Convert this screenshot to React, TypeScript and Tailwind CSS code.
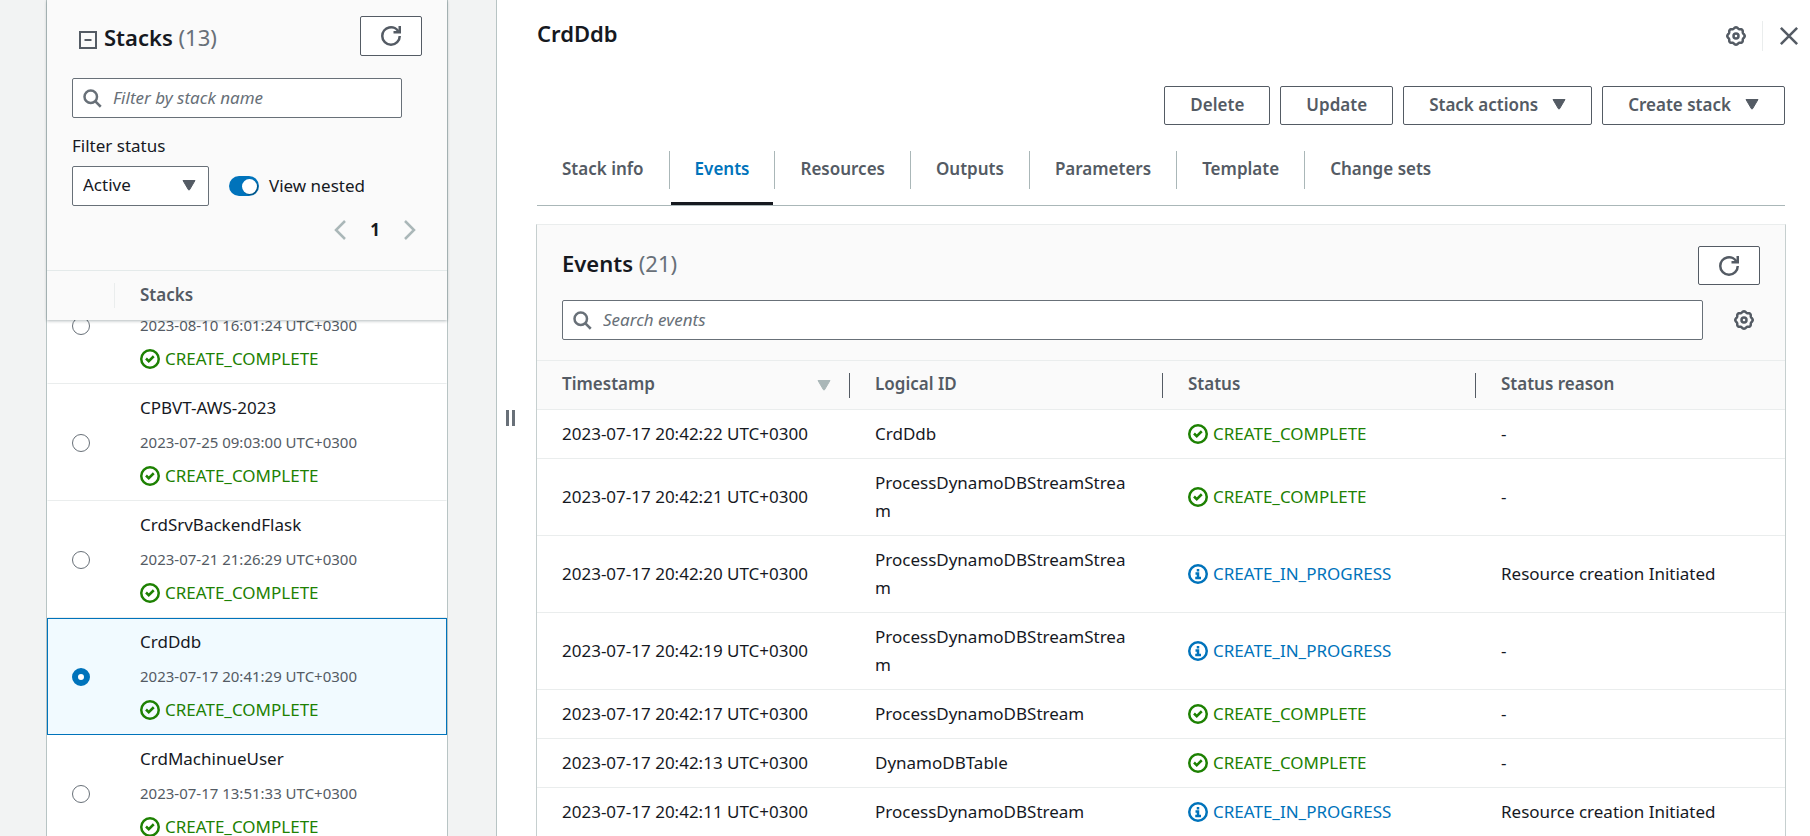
import React from "react";

const svgBase = { fill: "none", stroke: "currentColor", strokeWidth: 2, viewBox: "0 0 16 16", "aria-hidden": true } as const;

const Refresh = () => (
  <svg {...svgBase} className="size-5">
    <path d="M10 5h5V0" />
    <path d="M15 8a7 7 0 0 1-14 0 7 7 0 0 1 13.3-3" />
  </svg>
);
const Search = ({ className }: { className: string }) => (
  <svg {...svgBase} className={className}>
    <circle cx="7" cy="7" r="5" />
    <path d="M15 15l-4.5-4.5" />
  </svg>
);
const Caret = ({ className }: { className: string }) => (
  <svg viewBox="0 0 14 11" aria-hidden className={className}>
    <path d="M1 .5h12L7.6 9.700q-.6.9-1.200 0Z" fill="currentColor" stroke="currentColor" strokeLinejoin="round" />
  </svg>
);

// Eight-lobed rim, sampled from a polar curve around (8, 8).
const gearRim = Array.from({ length: 96 }, (_, i) => {
  const a = (i / 96) * Math.PI * 2;
  const r = 6.5 + 0.5 * Math.cos(8 * a);
  return `${(8 + r * Math.cos(a)).toFixed(2)},${(8 + r * Math.sin(a)).toFixed(2)}`;
}).join(" ");

const Gear = () => (
  <svg {...svgBase} className="size-5">
    <circle cx="8" cy="8" r="2" />
    <polygon points={gearRim} />
  </svg>
);
const Close = () => (
  <svg {...svgBase} className="size-5"><path d="M1.500 1.500l13 13M14.500 1.500l-13 13" /></svg>
);

function Status({ value }: { value: string }) {
  const ok = value === "CREATE_COMPLETE";
  return (
    <span className={ok ? "flex items-center gap-[5px] text-[#1d8102]" : "flex items-center gap-[5px] text-[#0073bb]"}>
      <svg {...svgBase} className="size-5 shrink-0">
        <circle cx="8" cy="8" r="7" />
        {ok ? <path d="M4.800 7.600l2.200 2.200 4-4" /> : <path d="M8 11.500V7.500H6M5.800 11.200h4.600M8 4v2" />}
      </svg>
      <span className="-mt-px">{value}</span>
    </span>
  );
}

const stacks = [
  { name: "", time: "2023-08-10 16:01:24 UTC+0300" },
  { name: "CPBVT-AWS-2023", time: "2023-07-25 09:03:00 UTC+0300" },
  { name: "CrdSrvBackendFlask", time: "2023-07-21 21:26:29 UTC+0300" },
  { name: "CrdDdb", time: "2023-07-17 20:41:29 UTC+0300", selected: true },
  { name: "CrdMachinueUser", time: "2023-07-17 13:51:33 UTC+0300" },
];

const tabs = ["Stack info", "Events", "Resources", "Outputs", "Parameters", "Template", "Change sets"];

const events = [
  ["2023-07-17 20:42:22 UTC+0300", "CrdDdb", "CREATE_COMPLETE", "-"],
  ["2023-07-17 20:42:21 UTC+0300", "ProcessDynamoDBStreamStream", "CREATE_COMPLETE", "-"],
  ["2023-07-17 20:42:20 UTC+0300", "ProcessDynamoDBStreamStream", "CREATE_IN_PROGRESS", "Resource creation Initiated"],
  ["2023-07-17 20:42:19 UTC+0300", "ProcessDynamoDBStreamStream", "CREATE_IN_PROGRESS", "-"],
  ["2023-07-17 20:42:17 UTC+0300", "ProcessDynamoDBStream", "CREATE_COMPLETE", "-"],
  ["2023-07-17 20:42:13 UTC+0300", "DynamoDBTable", "CREATE_COMPLETE", "-"],
  ["2023-07-17 20:42:11 UTC+0300", "ProcessDynamoDBStream", "CREATE_IN_PROGRESS", "Resource creation Initiated"],
];

const buttonClass =
  "flex h-[39px] items-center justify-center gap-[14px] rounded-[2px] border border-[#545b64] bg-white px-[25px] pb-[2px] font-semibold text-[#545b64]";
const inputClass =
  "h-10 w-full rounded-[2px] border border-[#687078] bg-white pb-[2px] pl-10 pr-3 text-[#16191f] placeholder:italic placeholder:text-[#687078]";

function Sidebar() {
  return (
    <aside className="flex w-[402px] shrink-0 flex-col border-x border-[#b8c4c4] bg-white">
      <div className="relative shrink-0 bg-[#fafafa] shadow-[0_1px_3px_rgba(0,28,36,0.3)]">
        <div className="px-[25px] pt-4">
          <div className="flex items-center justify-between">
            <h2 className="flex items-center gap-[7px] pt-[2px] pl-[7px] text-[22px] leading-7 font-semibold text-[#16191f]">
              <button aria-label="Collapse stacks" className="mt-[6px] text-[#545b64]">
                <svg viewBox="0 0 18 18" fill="none" stroke="currentColor" strokeWidth="2" className="size-[18px]" aria-hidden>
                  <path d="M1 1h16v16H1zM5.500 9h7" />
                </svg>
              </button>
              <span>Stacks <span className="font-normal text-[#687078]">(13)</span></span>
            </h2>
            <button aria-label="Refresh stacks" className="flex h-10 w-[62px] items-center justify-center rounded-[2px] border border-[#545b64] bg-white text-[#545b64]">
              <Refresh />
            </button>
          </div>
          <div className="relative mt-[22px] mr-5">
            <Search className="absolute top-[10px] left-[10px] size-5 text-[#687078]" />
            <input type="text" aria-label="Filter by stack name" placeholder="Filter by stack name" className={inputClass} />
          </div>
          <label htmlFor="status" className="mt-[14px] block leading-7">Filter status</label>
          <div className="mt-[6px] flex items-center">
            <div className="relative w-[137px]">
              <select id="status" defaultValue="Active" className="h-10 w-full appearance-none rounded-[2px] border border-[#687078] bg-white px-[10px] pb-[2px]">
                <option>Active</option>
                <option>Deleted</option>
              </select>
              <Caret className="pointer-events-none absolute top-[14px] right-[13px] h-[11px] w-[14px] text-[#545b64]" />
            </div>
            <label className="ml-5 flex items-center gap-[10px]">
              <input
                type="checkbox"
                defaultChecked
                className="flex h-5 w-[30px] appearance-none items-center justify-end rounded-full bg-[#0073bb] pr-[2px] before:size-[15px] before:rounded-full before:bg-white before:shadow-[1px_1px_1px_rgba(0,28,36,0.4)] before:content-['']"
              />
              View nested
            </label>
          </div>
          <nav aria-label="Pages" className="mt-[10px] flex items-center justify-end gap-6 pr-[6px] text-[#aab7b8]">
            <button aria-label="Previous page">
              <svg viewBox="0 0 12 20" fill="none" stroke="currentColor" strokeWidth="2.500" className="h-5 w-3" aria-hidden><path d="M11 1L2 10l9 9" /></svg>
            </button>
            <button className="w-[10px] leading-7 font-bold text-[#16191f]">1</button>
            <button aria-label="Next page">
              <svg viewBox="0 0 12 20" fill="none" stroke="currentColor" strokeWidth="2.500" className="h-5 w-3" aria-hidden><path d="M1 1l9 9-9 9" /></svg>
            </button>
          </nav>
        </div>
        <div className="mt-[26px] flex h-[50px] items-center border-t border-[#e4eaea] font-semibold text-[#545b64]">
          <span className="h-[25px] w-[68px] border-r border-[#eaeded]" />
          <span className="pb-[2px] pl-[25px]">Stacks</span>
        </div>
      </div>
      <div className="min-h-0 flex-1 overflow-hidden">
        <ul className="-mt-[53px]">
          {stacks.map((s) => (
            <li
              key={s.time}
              className={
                s.selected
                  ? "border border-[#0073bb] bg-[#f1faff]"
                  : "border border-transparent border-b-[#eaeded]"
              }
            >
              <label className="flex h-[115px] items-center pl-6">
                <input
                  type="radio"
                  name="stack"
                  defaultChecked={s.selected}
                  className="size-[18px] shrink-0 appearance-none rounded-full border border-[#687078] bg-white checked:border-[6px] checked:border-[#0073bb]"
                />
                <span className="ml-[50px] flex flex-col pb-[2px]">
                  <span className="h-7 leading-7">{s.name}</span>
                  <span className="mt-[6px] mb-[7px] text-[15px] leading-7 text-[#545b64]">{s.time}</span>
                  <span className="leading-7"><Status value="CREATE_COMPLETE" /></span>
                </span>
              </label>
            </li>
          ))}
        </ul>
      </div>
    </aside>
  );
}

export default function App() {
  return (
    <div className="flex h-screen overflow-hidden bg-[#f2f3f3] pl-[46px] font-['Noto_Sans',sans-serif] text-[17px] text-[#16191f]">
      <Sidebar />
      <main className="ml-12 flex min-w-0 flex-1 border-l border-[#b8c4c4] bg-white">
        <button aria-label="Resize panel" className="flex w-10 shrink-0 items-center gap-[3px] pl-[9px]">
          <span className="h-4 w-[3px] bg-[#687078]" />
          <span className="h-4 w-[3px] bg-[#687078]" />
        </button>
        <div className="min-w-0 flex-1 pt-5">
          <div className="flex h-8 items-center justify-between pr-[11px]">
            <h1 className="pb-[6px] text-[22px] leading-7 font-semibold">CrdDdb</h1>
            <div className="flex items-center text-[#545b64]">
              <button aria-label="Preferences"><Gear /></button>
              <span className="ml-4 h-[30px] w-px bg-[#eaeded]" />
              <button aria-label="Close panel" className="ml-4"><Close /></button>
            </div>
          </div>
          <div className="pr-[25px]">
            <div className="mt-[34px] flex justify-end gap-[10px]">
              <button className={buttonClass}>Delete</button>
              <button className={buttonClass}>Update</button>
              <button className={buttonClass}>Stack actions <Caret className="h-[11px] w-[14px]" /></button>
              <button className={buttonClass}>Create stack <Caret className="h-[11px] w-[14px]" /></button>
            </div>
            <div role="tablist" className="mt-[26px] flex border-b border-[#aab7b8]">
              {tabs.map((t) => (
                <div key={t} className="group flex h-[54px]">
                  <button
                    role="tab"
                    aria-selected={t === "Events"}
                    className="mx-px border-b-[3px] border-transparent px-6 pb-[15px] font-semibold text-[#545b64] aria-selected:border-[#16191f] aria-selected:text-[#0073bb]"
                  >
                    {t}
                  </button>
                  <span className="h-[38px] w-px bg-[#aab7b8] group-last:hidden" />
                </div>
              ))}
            </div>
            <section className="-mx-px mt-[18px] border-x border-t border-x-[#c6cfcf] border-t-[#eaeded]">
              <div className="bg-[#fafafa] pt-[21px] pr-[25px] pb-5 pl-[25px]">
                <div className="flex items-center justify-between">
                  <h2 className="pb-[5px] text-[22px] leading-7 font-semibold">Events <span className="font-normal text-[#687078]">(21)</span></h2>
                  <button aria-label="Refresh events" className="flex h-[39px] w-[62px] items-center justify-center rounded-[2px] border border-[#545b64] bg-white text-[#545b64]">
                    <Refresh />
                  </button>
                </div>
                <div className="mt-[15px] flex items-center">
                  <div className="relative flex-1">
                    <Search className="absolute top-[10px] left-[10px] size-5 text-[#687078]" />
                    <input type="text" aria-label="Search events" placeholder="Search events" className={inputClass} />
                  </div>
                  <button aria-label="Table preferences" className="mr-[6px] ml-[31px] text-[#545b64]"><Gear /></button>
                </div>
              </div>
              <table className="w-full table-fixed text-left">
                <thead>
                  <tr className="h-[49px] border-y border-[#eaeded] bg-[#fafafa] text-[#545b64]">
                    {["Timestamp", "Logical ID", "Status", "Status reason"].map((h, i) => (
                      <th key={h} className={i < 3 ? "w-[313px] p-0 font-semibold" : "p-0 font-semibold"}>
                        <span className={i < 3 ? "flex h-[25px] items-center justify-between border-r border-[#545b64] pr-[18px] pl-[25px]" : "flex h-[25px] items-center pl-[25px]"}>
                          <span className="pb-[2px]">{h}</span>
                          {i === 0 && <Caret className="h-[11px] w-[14px] text-[#aab7b8]" />}
                        </span>
                      </th>
                    ))}
                  </tr>
                </thead>
                <tbody>
                  {events.map(([time, id, status, reason]) => (
                    <tr key={time} className="border-b border-[#eaeded]">
                      <td className="py-[10px] pl-[25px] leading-7 whitespace-nowrap">{time}</td>
                      <td className="py-[10px] pr-7 pl-[25px] leading-7 break-words">{id}</td>
                      <td className="py-[10px] pl-[25px] leading-7 whitespace-nowrap"><Status value={status} /></td>
                      <td className="py-[10px] pl-[25px] leading-7">{reason}</td>
                    </tr>
                  ))}
                </tbody>
              </table>
            </section>
          </div>
        </div>
      </main>
    </div>
  );
}
